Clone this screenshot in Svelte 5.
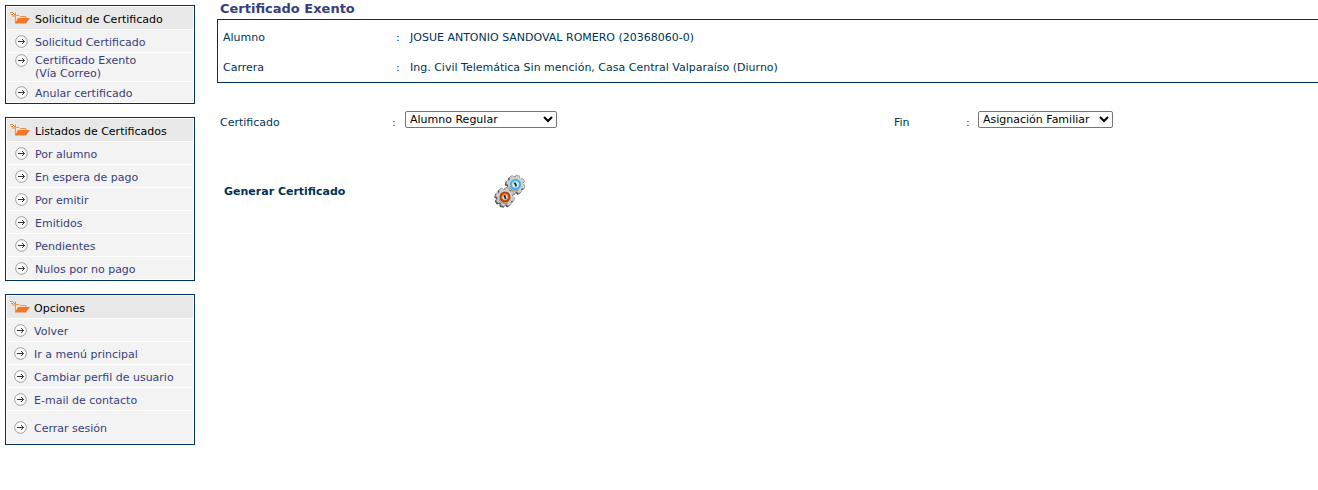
<script>
  const menus = [
    {
      title: 'Solicitud de Certificado',
      items: [
        { lines: ['Solicitud Certificado'] },
        { lines: ['Certificado Exento', '(Vía Correo)'], kind: 'double' },
        { lines: ['Anular certificado'], kind: 'short' }
      ]
    },
    {
      title: 'Listados de Certificados',
      items: [
        { lines: ['Por alumno'] },
        { lines: ['En espera de pago'] },
        { lines: ['Por emitir'] },
        { lines: ['Emitidos'] },
        { lines: ['Pendientes'] },
        { lines: ['Nulos por no pago'] }
      ]
    },
    {
      title: 'Opciones',
      narrow: true,
      items: [
        { lines: ['Volver'] },
        { lines: ['Ir a menú principal'] },
        { lines: ['Cambiar perfil de usuario'] },
        { lines: ['E-mail de contacto'] },
        { lines: ['Cerrar sesión'], kind: 'tall' }
      ]
    }
  ];

  const student = [
    ['Alumno', 'JOSUE ANTONIO SANDOVAL ROMERO (20368060-0)'],
    ['Carrera', 'Ing. Civil Telemática Sin mención, Casa Central Valparaíso (Diurno)']
  ];

  const teeth = [0, 45, 90, 135, 180, 225, 270, 315];
</script>

{#snippet gear(cx, cy, outer, inner)}
  <g transform="translate({cx} {cy})">
    <g transform="translate(-1 1)" fill="#4d4d4d">
      {#each teeth as angle}
        <rect x="-2.4" y="-9.6" width="4.8" height="5" rx="1.2" transform="rotate({angle + 15})" />
      {/each}
      <circle r="7.8" />
    </g>
    <g fill="#cfcfcf">
      {#each teeth as angle}
        <rect x="-2.2" y="-9.4" width="4.4" height="5" rx="1.2" stroke="#858585" stroke-width=".6" transform="rotate({angle + 15})" />
      {/each}
      <circle r="7.6" />
    </g>
    <path d="M-6.2 2A6.5 6.5 0 0 0 3 5.8" fill="none" stroke="#8b8b8b" stroke-width="1" />
    <circle r="4.6" fill={inner} stroke={outer} stroke-width="1.8" />
    <circle r="2.6" fill="#ededed" />
    <path d="M-1.8 -1.4L.2 -2.2L1.6 1.5L0 2.3Z" fill="#292929" />
  </g>
{/snippet}

<div class="page">
  <nav class="sidebar" aria-label="Certificados">
    {#each menus as menu}
      <section class="menu" class:narrow={menu.narrow}>
        <h2>
          <svg class="folder" width="20" height="14" viewBox="0 0 20 14" aria-hidden="true">
            <path d="M5.5 12V4.5H9L10 5.5H16V7.5" fill="#fbe3cf" stroke="#f0964c" stroke-width="1" />
            <path d="M8 7H20L16 12.5H5Z" fill="#ed772b" />
            <path d="M0 1.5H2.5L5.5 4.5M5.5 1.5V5H2M1 3.5H3" fill="none" stroke="#ef8a36" stroke-width="1" />
          </svg>
          <span>{menu.title}</span>
        </h2>
        <ul>
          {#each menu.items as item}
            <li class={item.kind}>
              <a href="#menu">
                <svg class="arrow" width="13" height="13" viewBox="0 0 13 13" aria-hidden="true">
                  <circle cx="6.5" cy="6.5" r="5.8" fill="#fff" stroke="#9a9a9a" stroke-width="1" />
                  <path d="M3 6.5H9.5M7 4L9.5 6.5L7 9" fill="none" stroke="#333" stroke-width="1" />
                </svg>
                <span>
                  {#each item.lines as line, i}{#if i}<br />{/if}{line}{/each}
                </span>
              </a>
            </li>
          {/each}
        </ul>
      </section>
    {/each}
  </nav>

  <main>
    <h1>Certificado Exento</h1>
    <dl class="student">
      {#each student as [label, value]}
        <div>
          <dt>{label}</dt>
          <dd class="colon">:</dd>
          <dd>{value}</dd>
        </div>
      {/each}
    </dl>

    <form onsubmit={(e) => e.preventDefault()}>
      <div class="fields">
        <label for="certificado">Certificado</label>
        <span>:</span>
        <div class="control">
          <select id="certificado" class="wide"><option>Alumno Regular</option></select>
          <svg width="10" height="7" viewBox="0 0 10 7" aria-hidden="true"><path d="M1 1L5 5L9 1" /></svg>
        </div>
        <label for="fin">Fin</label>
        <span>:</span>
        <div class="control">
          <select id="fin"><option>Asignación Familiar</option></select>
          <svg width="10" height="7" viewBox="0 0 10 7" aria-hidden="true"><path d="M1 1L5 5L9 1" /></svg>
        </div>
      </div>
      <button type="submit">
        <span>Generar Certificado</span>
        <svg width="32" height="34" viewBox="0 0 32 34" aria-hidden="true">
          {@render gear(21.5, 10.5, '#4aaed6', '#a6e0f4')}
          {@render gear(11, 23, '#b0440f', '#f17425')}
        </svg>
      </button>
    </form>
  </main>
</div>

<style>
  :global(body) {
    background: #fff;
  }

  .page {
    display: flex;
    gap: 22px;
    padding: 0 0 20px 5px;
    color: #003356;
    font: 11px/13px Tahoma, "DejaVu Sans", sans-serif;
  }

  .sidebar {
    display: flex;
    flex: 0 0 190px;
    flex-direction: column;
    gap: 13px;
    padding-top: 5px;
  }

  .menu {
    padding: 1px;
    border: 1px solid #003356;
  }

  h1, h2, ul, dl, dd {
    margin: 0;
    padding: 0;
  }

  h2 {
    display: flex;
    align-items: center;
    gap: 5px;
    height: 22px;
    padding: 2px 0 0 3px;
    box-sizing: border-box;
    background: #e8e8e8;
    color: #000;
    font: inherit;
  }

  ul {
    list-style: none;
  }

  li {
    margin-top: 1px;
    background: #f3f3f3;
  }

  a {
    display: flex;
    align-items: center;
    gap: 7px;
    min-height: 22px;
    padding: 3px 0 0 8px;
    box-sizing: border-box;
    color: #383e7b;
    text-decoration: none;
  }

  svg {
    flex: none;
  }

  .folder {
    margin-bottom: 2px;
  }

  .arrow {
    margin-bottom: 3px;
  }

  .double a {
    align-items: flex-start;
    min-height: 28px;
    padding-top: 1px;
  }

  .short a {
    min-height: 20px;
  }

  .tall a {
    min-height: 32px;
  }

  .narrow h2 {
    gap: 4px;
  }

  .narrow a {
    padding-left: 7px;
  }

  main {
    flex: 1;
    min-width: 0;
  }

  h1 {
    padding: 1px 0 3px 3px;
    color: #383e7b;
    font: bold 13px/15px Verdana, "DejaVu Sans", sans-serif;
  }

  .student {
    padding: 2px 0 0 5px;
    border: 1px solid #003356;
    border-right: 0;
  }

  .student div {
    display: grid;
    grid-template-columns: 173px 14px 1fr;
    align-items: center;
    min-height: 30px;
  }

  .fields {
    display: grid;
    grid-template-columns: 172px 13px 1fr 72px 12px 340px;
    align-items: start;
    padding: 27px 0 0 3px;
  }

  .fields label,
  .fields > span {
    padding-top: 6px;
  }

  .control {
    display: grid;
    width: max-content;
    align-items: center;
    padding-top: 1px;
  }

  .control > * {
    grid-area: 1 / 1;
  }

  .control svg {
    justify-self: end;
    margin-right: 4px;
    pointer-events: none;
  }

  .control path {
    fill: none;
    stroke: #000;
    stroke-width: 2;
  }

  select {
    width: 135px;
    height: 17px;
    margin: 0;
    padding: 0 18px 0 4px;
    appearance: none;
    border: 1px solid #767676;
    border-radius: 2px;
    background: #fff;
    color: #000;
    font: inherit;
  }

  select.wide {
    width: 152px;
  }

  button {
    display: grid;
    grid-template-columns: 270px 32px;
    align-items: center;
    margin-top: 45px;
    padding: 0 0 0 7px;
    border: 0;
    background: none;
    color: #003356;
    font: bold 11px/13px Tahoma, "DejaVu Sans", sans-serif;
    text-align: left;
  }
</style>
